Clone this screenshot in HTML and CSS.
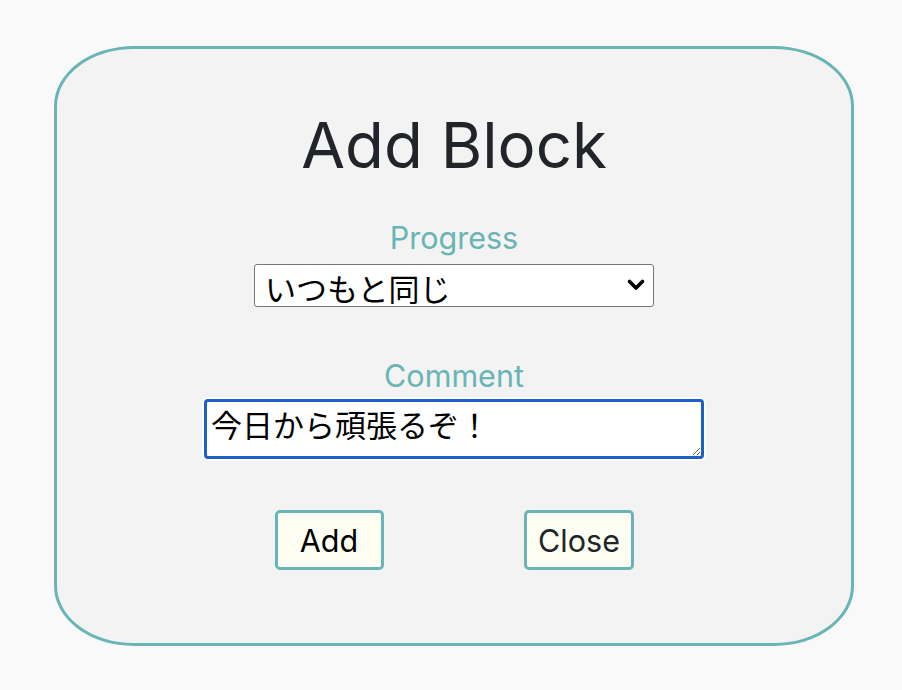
FILE: index.html
```html
<!DOCTYPE html>
<html lang="ja">
<head>
<meta charset="utf-8">
<title>Add Block</title>
<link rel="stylesheet" href="styles.css">
</head>
<body>
<div class="modal">
  <h1 class="title">Add Block</h1>
  <div class="field">
    <label class="label" for="progress">Progress</label>
    <div class="select-wrap">
      <select id="progress" class="select">
        <option>いつもと同じ</option>
      </select>
      <svg class="chevron" width="20" height="14" viewBox="0 0 20 14"><path d="M3.5 3.5 L10 10 L16.5 3.5" fill="none" stroke="#000" stroke-width="3.6" stroke-linecap="round" stroke-linejoin="round"/></svg>
    </div>
  </div>
  <div class="field field-comment">
    <label class="label" for="comment">Comment</label>
    <textarea id="comment" class="textarea">今日から頑張るぞ！</textarea>
  </div>
  <div class="buttons">
    <div class="btn-cell"><button class="btn btn-add">Add</button></div>
    <div class="btn-cell"><button class="btn btn-close">Close</button></div>
  </div>
</div>
</body>
</html>
```

FILE: styles.css
```css
html, body {
  margin: 0;
  padding: 0;
  background: #f9f9f9;
}
body {
  font-family: Inter, "Noto Sans CJK JP", sans-serif;
}
.modal {
  box-sizing: border-box;
  width: 800px;
  height: 600px;
  margin: 46px 0 0 54px;
  border: 3px solid #69b5b5;
  border-radius: 10%;
  background: #f3f3f3;
  display: flex;
  flex-direction: column;
  align-items: center;
}
.title {
  margin: 58px 0 0;
  font-size: 63.5px;
  font-weight: 400;
  line-height: 76px;
  color: #212529;
}
.field {
  display: flex;
  flex-direction: column;
  align-items: center;
  margin-top: 38px;
}
.field-comment {
  margin-top: 52px;
}
.label {
  font-size: 30.5px;
  line-height: 34px;
  color: #69b5b5;
}
.select-wrap {
  position: relative;
  width: 400px;
  height: 43px;
  margin-top: 9px;
}
.select {
  appearance: none;
  -webkit-appearance: none;
  box-sizing: border-box;
  width: 400px;
  height: 43px;
  border: 1px solid #767676;
  border-radius: 3px;
  background: #fff;
  padding: 0 10px 2px;
  font-family: "Noto Sans CJK JP", sans-serif;
  font-size: 31px;
  color: #000;
}
.chevron {
  position: absolute;
  right: 8px;
  top: 14px;
  pointer-events: none;
}
.textarea {
  box-sizing: border-box;
  width: 500px;
  height: 60px;
  margin-top: 6px;
  border: 3px solid #1f5fca;
  border-radius: 4px;
  box-shadow: 0 0 0 2px #fff;
  background: #fff;
  padding: 2px 4px;
  font-family: "Noto Sans CJK JP", sans-serif;
  font-size: 31px;
  line-height: 40px;
  color: #000;
  outline: none;
}
.buttons {
  display: grid;
  grid-template-columns: 250px 250px;
  margin-top: 51px;
}
.btn-cell {
  display: flex;
  justify-content: center;
}
.btn {
  box-sizing: border-box;
  height: 60px;
  border: 3px solid #69b5b5;
  border-radius: 5px;
  background: #fefff2;
  font-family: Inter, sans-serif;
  font-size: 30.5px;
  padding: 0 8px;
}
.btn-add {
  width: 109px;
  color: #000;
}
.btn-close {
  width: 110px;
  color: #212529;
}
```
